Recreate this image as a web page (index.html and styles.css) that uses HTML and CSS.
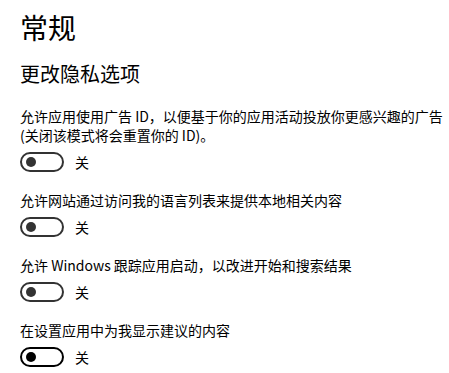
FILE: index.html
```html
<!DOCTYPE html>
<html lang="zh-CN">
<head>
    <meta charset="UTF-8">
    <meta name="viewport" content="width=device-width, initial-scale=1.0">
    <title>常规</title>
    <link rel="stylesheet" href="styles.css">
</head>

<body>
    <div class="page">
        <h1 class="title">常规</h1>
        <h2 class="subtitle">更改隐私选项</h2>

        <div class="setting">
            <div class="label">允许应用使用广告 ID，以便基于你的应用活动投放你更感兴趣的广告 (关闭该模式将会重置你的 ID)。</div>
            <div class="toggle-row">
                <span class="toggle"><span class="knob"></span></span>
                <span class="state">关</span>
            </div>
        </div>

        <div class="setting">
            <div class="label">允许网站通过访问我的语言列表来提供本地相关内容</div>
            <div class="toggle-row">
                <span class="toggle"><span class="knob"></span></span>
                <span class="state">关</span>
            </div>
        </div>

        <div class="setting">
            <div class="label">允许 Windows 跟踪应用启动，以改进开始和搜索结果</div>
            <div class="toggle-row">
                <span class="toggle"><span class="knob"></span></span>
                <span class="state">关</span>
            </div>
        </div>

        <div class="setting">
            <div class="label">在设置应用中为我显示建议的内容</div>
            <div class="toggle-row">
                <span class="toggle toggle-focus"><span class="knob"></span></span>
                <span class="state">关</span>
            </div>
        </div>
    </div>
</body>
</html>
```

FILE: styles.css
```css
html, body {
    margin: 0;
    padding: 0;
    background-color: #fff;
}

body {
    font-family: "Noto Sans CJK SC", "Noto Sans", sans-serif;
    color: #000;
    overflow: hidden;
}

.page {
    padding: 9px 6px 0 20px;
}

.title {
    margin: 0;
    font-size: 28px;
    font-weight: normal;
    line-height: 36px;
}

.subtitle {
    margin: 14px 0 0 0;
    font-size: 20px;
    font-weight: normal;
    line-height: 29px;
}

.setting {
    margin-top: 19px;
}

.setting + .setting {
    margin-top: 19px;
}

.label {
    font-size: 14px;
    line-height: 19px;
    width: 425px;
}

.toggle-row {
    display: flex;
    align-items: center;
    margin-top: 7px;
    height: 20px;
}

.toggle {
    box-sizing: border-box;
    display: flex;
    align-items: center;
    width: 44px;
    height: 20px;
    border: 2px solid #333;
    border-radius: 10px;
    padding-left: 4px;
}

.knob {
    width: 10px;
    height: 10px;
    border-radius: 50%;
    background-color: #333;
}

.toggle-focus {
    border-color: #000;
}

.toggle-focus .knob {
    background-color: #000;
}

.state {
    margin-left: 11px;
    font-size: 14px;
    line-height: 20px;
}
```
